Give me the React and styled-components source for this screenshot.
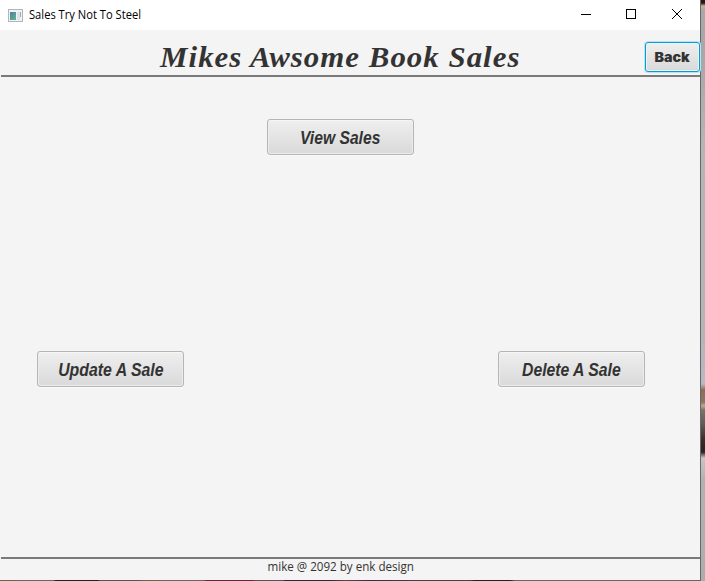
import React from "react";
import styled, { createGlobalStyle } from "styled-components";

const GlobalStyle = createGlobalStyle`
  * { box-sizing: border-box; }
  body { margin: 0; overflow: hidden; }
`;

const Desktop = styled.div`
  display: flex;
  width: 705px;
  height: 581px;
  background: linear-gradient(180deg,
    #2a1517 0px, #2a1517 3px, #c8b48c 6px, #a9a8a8 10px, #a7a8aa 60px,
    #b5b6b8 150px, #b4b5b7 330px, #b9b9c0 384px, #8b6c58 390px,
    #8a7766 402px, #c0a888 406px, #77746c 410px, #5c5a52 425px,
    #3a2b28 440px, #2c2020 452px, #c9c4c6 458px, #b2b2b2 480px, #adadad 581px);
`;

const Window = styled.div`
  display: flex;
  flex-direction: column;
  width: 701px;
  height: 581px;
  border-right: 1px solid #686868;
  background: #f4f4f4;
`;

const TitleBar = styled.header`
  display: flex;
  align-items: center;
  height: 30px;
  padding-left: 8px;
  background: #fff;
`;

const WindowTitle = styled.div`
  flex: 1;
  margin: -1px 0 0 6px;
  font: 12px/16px "Open Sans", sans-serif;
  color: #000;
`;

const WindowControl = styled.div`
  display: grid;
  place-items: center;
  width: 45px;
  height: 28px;
`;

const Controls = styled.div`
  display: flex;
  height: 28px;
  margin: -2px 2px 0 0;

  svg { display: block; }
  ${WindowControl}:last-child { padding-left: 2px; }
`;

const Fit = styled.span`
  display: inline-block;
  white-space: nowrap;
  transform: scaleX(${(p) => p.$x});
  transform-origin: ${(p) => p.$origin || "center"};
`;

const Banner = styled.div`
  display: grid;
  grid-template-columns: 644px 55px;
  align-items: start;
  height: 47px;
  border-bottom: 2px solid #7a7a7a;
  margin-left: 1px;
`;

const Heading = styled.h1`
  margin: 9px 0 0 -1px;
  padding-left: 36px;
  text-align: center;
  font: italic 700 30px/36px "Liberation Serif", serif;
  letter-spacing: 1px;
  color: #333;
`;

const BackButton = styled.button`
  width: 55px;
  height: 30px;
  margin: 12px 0 0;
  padding: 0;
  border: 1px solid #039ed3;
  border-radius: 3px;
  background: linear-gradient(#efefef, #d9d9d9);
  box-shadow: 0 0 0 1px #b9e3f0, inset 0 0 0 1px #f0f3f4;
  font: 900 13px/20px Inter, "Liberation Sans", sans-serif;
  color: #333;
`;

const Content = styled.main`
  display: grid;
  grid-template-columns: 147px 83px 147px 84px 147px;
  grid-template-rows: 36px 36px;
  row-gap: 196px;
  height: 480px;
  padding: 42px 0 0 37px;
`;

const ActionButton = styled.button`
  grid-column: ${(p) => p.$column};
  grid-row: ${(p) => p.$row};
  padding: 2px 0 0;
  border: 1px solid #b5b5b5;
  border-radius: 3px;
  background: linear-gradient(#efefef, #d9d9d9);
  box-shadow: inset 0 1px 0 #f6f6f6, inset 0 0 0 1px #ececec, 0 1px 0 #fafafa;
  font: italic 700 18px/24px "Liberation Sans", sans-serif;
  color: #333;
`;

const Footer = styled.footer`
  height: 23px;
  margin-left: 1px;
  border-top: 2px solid #7a7a7a;
  padding-right: 20px;
  text-align: center;
  font: 12px/16px "Open Sans", sans-serif;
  color: #333;
`;

const BottomEdge = styled.div`
  height: 1px;
  background: linear-gradient(90deg,
    #66664f 0 15px, #666 20px 54px, #222 55px 98px, #555 100px 138px,
    #66664f 145px 158px, #666 160px 204px, #6b2438 206px 252px,
    #555 255px 283px, #292a35 285px 330px, #554d40 345px, #303040 370px,
    #444 420px 470px, #222 475px 510px, #666 515px);
`;

const actions = [
  { label: "View Sales", column: 3, row: 1, scale: 0.87 },
  { label: "Update A Sale", column: 1, row: 2, scale: 0.88 },
  { label: "Delete A Sale", column: 5, row: 2, scale: 0.875 },
];

function AppIcon() {
  return (
    <svg width="15" height="13" viewBox="0 0 15 13">
      <defs>
        <linearGradient id="pane" x1="0" y1="0" x2="1" y2="1">
          <stop offset="0" stopColor="#4b7fa8" />
          <stop offset="1" stopColor="#66b487" />
        </linearGradient>
      </defs>
      <rect x=".5" y=".5" width="14" height="12" fill="#f1f2f3" stroke="#b0b5bd" />
      <rect x="2" y="3" width="6" height="8" fill="url(#pane)" />
      <rect x="9" y="3" width="3" height="8" fill="#dfe2e4" />
      <rect x="12" y="3" width="1" height="5" fill="#8bbd9b" />
    </svg>
  );
}

export default function App() {
  return (
    <>
      <GlobalStyle />
      <Desktop>
        <Window>
          <TitleBar>
            <AppIcon />
            <WindowTitle><Fit $x={0.93} $origin="left">Sales Try Not To Steel</Fit></WindowTitle>
            <Controls>
              <WindowControl>
                <svg width="10" height="10"><path d="M0 5.5h10" stroke="#000" /></svg>
              </WindowControl>
              <WindowControl>
                <svg width="10" height="10"><rect x=".5" y=".5" width="9" height="9" fill="none" stroke="#000" /></svg>
              </WindowControl>
              <WindowControl>
                <svg width="10" height="10"><path d="M0 0l10 10M10 0L0 10" stroke="#000" /></svg>
              </WindowControl>
            </Controls>
          </TitleBar>
          <Banner>
            <Heading><Fit $x={1.028}>Mikes Awsome Book Sales</Fit></Heading>
            <BackButton><Fit $x={1.1}>Back</Fit></BackButton>
          </Banner>
          <Content>
            {actions.map((a) => (
              <ActionButton key={a.label} $column={a.column} $row={a.row}>
                <Fit $x={a.scale}>{a.label}</Fit>
              </ActionButton>
            ))}
          </Content>
          <Footer><Fit $x={0.967}>mike @ 2092 by enk design</Fit></Footer>
          <BottomEdge />
        </Window>
      </Desktop>
    </>
  );
}
